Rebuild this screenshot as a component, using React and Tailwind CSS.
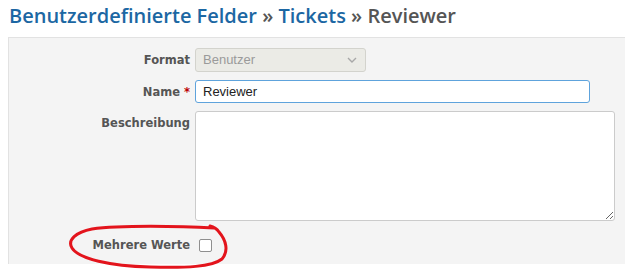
const labelCls = "text-right font-['DejaVu_Sans',Verdana,sans-serif] text-[11.5px] font-bold text-[#555] leading-[16px]"

const App = () => {
  return (
    <div className="relative h-[269px] w-[625px] overflow-hidden bg-white font-['Liberation_Sans',Arial,sans-serif]">
      <h2 className="whitespace-nowrap pl-[9px] pt-[1px] font-['Open_Sans',sans-serif] text-[20px] font-semibold leading-[29px] text-[#555]">
        <span className="text-[#1c67a3]">Benutzerdefinierte Felder</span> »{' '}
        <span className="text-[#1c67a3]">Tickets</span> » Reviewer
      </h2>

      <div className="ml-[8px] mt-[7px] h-[227px] w-[640px] border-l border-t border-[#e2e2e2] bg-[#f4f4f4] pt-[10px]">
        <div className="grid grid-cols-[181px_1fr] gap-x-[5px] gap-y-[8px]">
          <div className={`${labelCls} self-center`}>Format</div>
          <div className="flex h-[24px] w-[171px] items-center justify-between rounded-[3px] border border-[#d3d3cd] bg-[#ebebe6] pl-[7px] pr-[8px] text-[13px] text-[#9a9a9a]">
            <span>Benutzer</span>
            <svg width="10" height="6" viewBox="0 0 10 6" fill="none">
              <path d="M1 1l4 4 4-4" stroke="#a8a8a8" strokeWidth="1.4" />
            </svg>
          </div>

          <div className={`${labelCls} self-center`}>
            Name <span className="text-[#bb0000]">*</span>
          </div>
          <input
            type="text"
            defaultValue="Reviewer"
            className="h-[23px] w-[395px] rounded-[3px] border border-[#5ea3dc] bg-white px-[7px] text-[13px] text-[#222] outline-none"
          />

          <div className={`${labelCls} pt-[4px]`}>Beschreibung</div>
          <textarea className="block h-[110px] w-[420px] rounded-[3px] border border-[#cbcbcb] bg-white" />

          <div className={`${labelCls} flex h-[32px] items-center justify-end`}>Mehrere Werte</div>
          <div className="flex h-[32px] items-center">
            <span className="ml-[4px] mt-[1px] block h-[13px] w-[13px] rounded-[2px] border border-[#8f8f8f] bg-white" />
          </div>
        </div>
      </div>

      <svg className="pointer-events-none absolute left-0 top-0" width="625" height="269" viewBox="0 0 625 269" fill="none">
        <path
          d="M214 228 C180 226 120 225 92 229 C76 232 67 240 72 248 C79 259 110 266 150 267 C186 268 212 267 222 259 C229 251 226 240 219 232 C217 229 214 227 210 226"
          stroke="#e3141c"
          strokeWidth="3"
          strokeLinecap="round"
        />
      </svg>
    </div>
  )
}

export default App
